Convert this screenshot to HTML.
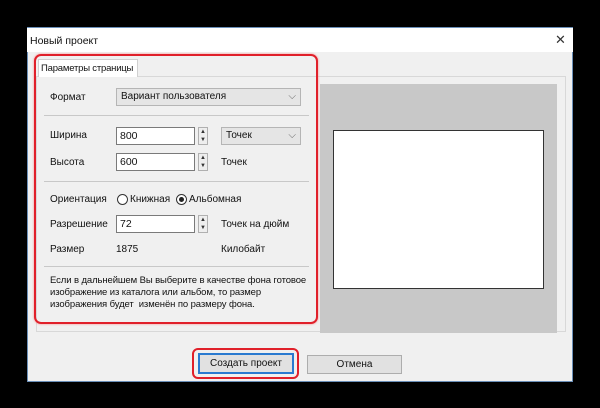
<!DOCTYPE html>
<html><head><meta charset="utf-8"><style>
*{margin:0;padding:0;box-sizing:border-box}
body{width:600px;height:408px;background:#000;position:relative;overflow:hidden;font-family:"Liberation Sans","DejaVu Sans",sans-serif;font-size:10px;color:#111}
.a{position:absolute;white-space:nowrap}
.win{left:27px;top:27px;width:546px;height:355px;background:#f0f0f0;border:1px solid #6a8fb8}
.title{left:27px;top:28px;width:546px;height:24px;background:#fff}
.inp{background:#fff;border:1px solid #7a7a7a;padding:0 3px;height:18px;line-height:16px;font-size:10.5px}
.cmb{background:#e5e5e5;border:1px solid #b5b5b5;padding:0 4px;height:18px;line-height:16px}
.spin{width:10px;height:18px;border:1px solid #b0b0b0;background:#eee;font-size:6px;line-height:8px;text-align:center;color:#333}
.hr{height:1px;background:#c8c8c8}
.rad{width:11px;height:11px;border:1px solid #333;border-radius:50%;background:#fff}
</style></head><body>
<div class="a win"></div>
<div class="a title"></div>
<div class="a" style="left:30px;top:35px;font-size:10.5px">Новый проект</div>
<div class="a" style="left:555px;top:32px;font-size:13px;color:#333">✕</div>
<div class="a" style="left:36px;top:76px;width:530px;height:256px;border:1px solid #d8d8d8;background:#f0f0f0"></div>
<div class="a" style="left:38px;top:59px;width:100px;height:18px;background:#fff;border:1px solid #d0d0d0;border-bottom:none;padding:3px 2px;font-size:9.5px;letter-spacing:-0.2px">Параметры страницы</div>
<div class="a" style="left:320px;top:84px;width:237px;height:249px;background:#c8c8c8"></div>
<div class="a" style="left:333px;top:130px;width:211px;height:159px;background:#fff;border:1px solid #333"></div>

<div class="a" style="left:50px;top:92px">Формат</div>
<div class="a cmb" style="left:116px;top:88px;width:185px">Вариант пользователя<span style="position:absolute;right:4px;top:0;color:#666">⌵</span></div>
<div class="a hr" style="left:44px;top:115px;width:265px"></div>
<div class="a" style="left:50px;top:130px">Ширина</div>
<div class="a inp" style="left:116px;top:127px;width:79px">800</div>
<div class="a spin" style="left:198px;top:127px">▲<br>▼</div>
<div class="a cmb" style="left:221px;top:127px;width:80px">Точек<span style="position:absolute;right:4px;top:0;color:#666">⌵</span></div>
<div class="a" style="left:50px;top:157px">Высота</div>
<div class="a inp" style="left:116px;top:153px;width:79px">600</div>
<div class="a spin" style="left:198px;top:153px">▲<br>▼</div>
<div class="a" style="left:221px;top:157px">Точек</div>
<div class="a hr" style="left:44px;top:181px;width:265px"></div>
<div class="a" style="left:50px;top:194px">Ориентация</div>
<div class="a rad" style="left:117px;top:194px"></div>
<div class="a" style="left:130px;top:194px">Книжная</div>
<div class="a rad" style="left:176px;top:194px"><div style="margin:2px;width:5px;height:5px;border-radius:50%;background:#222"></div></div>
<div class="a" style="left:189px;top:194px">Альбомная</div>
<div class="a" style="left:50px;top:219px">Разрешение</div>
<div class="a inp" style="left:116px;top:215px;width:79px">72</div>
<div class="a spin" style="left:198px;top:215px">▲<br>▼</div>
<div class="a" style="left:221px;top:219px">Точек на дюйм</div>
<div class="a" style="left:50px;top:244px">Размер</div>
<div class="a" style="left:116px;top:244px">1875</div>
<div class="a" style="left:221px;top:244px">Килобайт</div>
<div class="a hr" style="left:44px;top:266px;width:265px"></div>
<div class="a" style="left:50px;top:275px;line-height:12px;font-size:9.5px;letter-spacing:-0.1px">Если в дальнейшем Вы выберите в качестве фона готовое<br>изображение из каталога или альбом, то размер<br>изображения будет&nbsp; изменён по размеру фона.</div>

<div class="a" style="left:34px;top:54px;width:284px;height:270px;border:2px solid #e0202a;border-radius:7px;box-shadow:0 0 2px #f88"></div>
<div class="a" style="left:198px;top:353px;width:96px;height:21px;background:#e1e1e1;border:2px solid #2a7ad0;text-align:center;line-height:17px">Создать проект</div>
<div class="a" style="left:192px;top:348px;width:107px;height:31px;border:2px solid #e0202a;border-radius:6px"></div>
<div class="a" style="left:307px;top:355px;width:95px;height:19px;background:#e1e1e1;border:1px solid #adadad;text-align:center;line-height:17px">Отмена</div>
</body></html>
